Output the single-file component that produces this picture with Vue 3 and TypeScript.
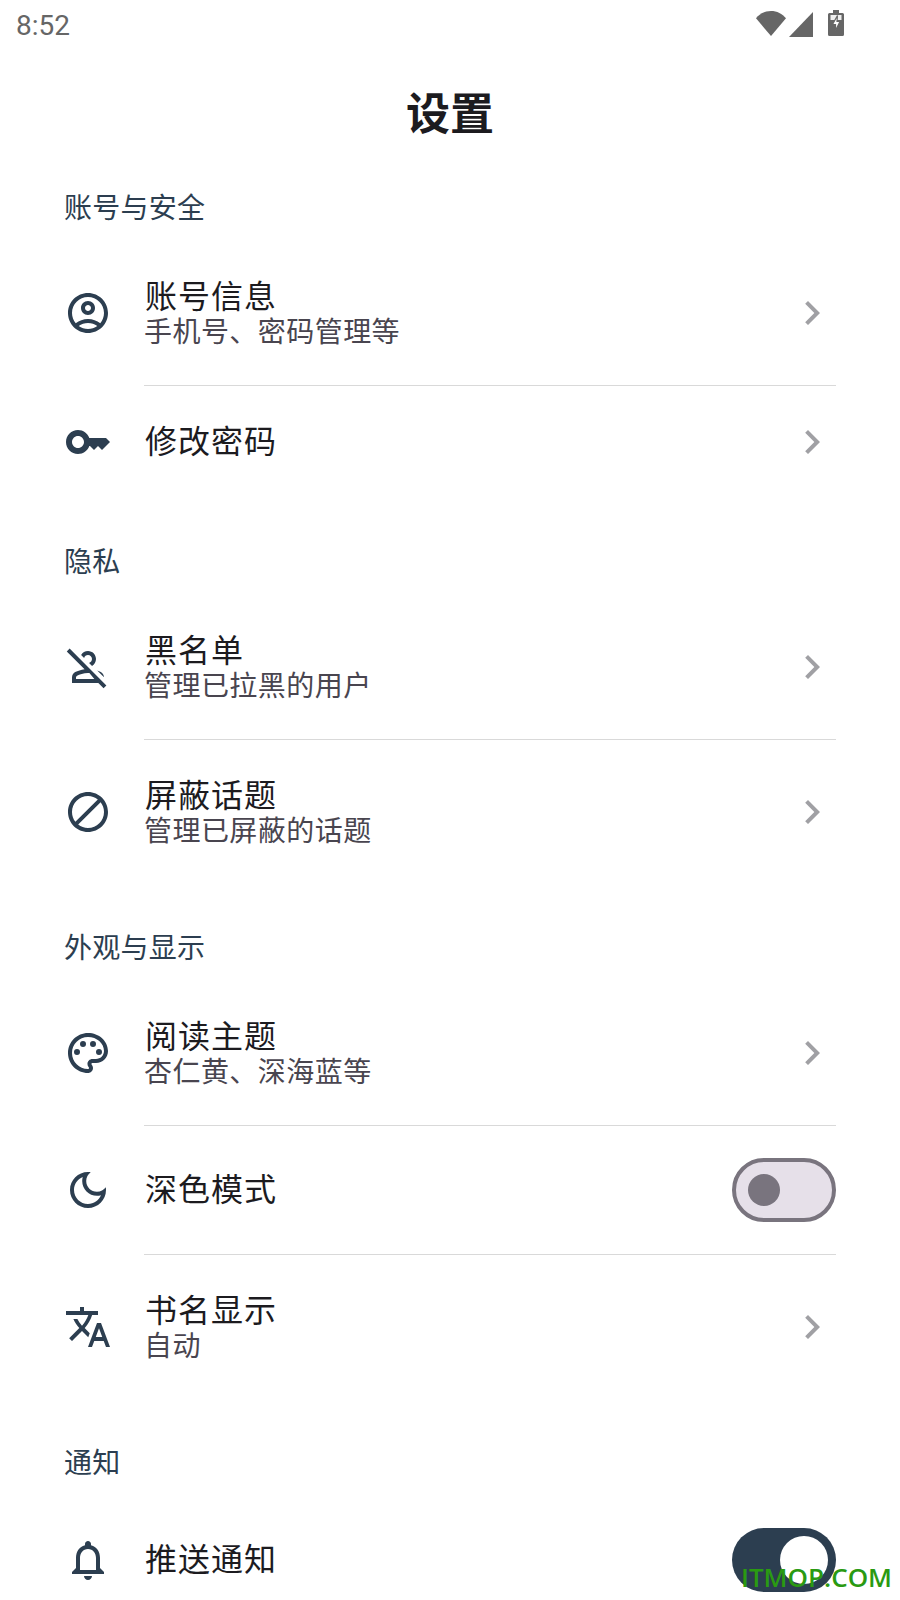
<script setup lang="ts">
interface Row {
  icon: string;
  title: string;
  sub?: string;
  toggle?: 'on' | 'off';
}
interface Section {
  label: string;
  rows: Row[];
}

const icons: Record<string, string> = {
  account:
    'M12 2C6.48 2 2 6.48 2 12s4.48 10 10 10 10-4.48 10-10S17.52 2 12 2zM7.35 18.5C8.66 17.56 10.26 17 12 17s3.34.56 4.65 1.5C15.34 19.44 13.74 20 12 20s-3.34-.56-4.65-1.5zm10.79-1.38C16.45 15.8 14.32 15 12 15s-4.45.8-6.14 2.12C4.7 15.73 4 13.95 4 12c0-4.42 3.58-8 8-8s8 3.58 8 8c0 1.95-.7 3.73-1.86 5.12zM12 6c-1.93 0-3.5 1.57-3.5 3.5S10.07 13 12 13s3.5-1.57 3.5-3.5S13.93 6 12 6zm0 5c-.83 0-1.5-.67-1.5-1.5S11.17 8 12 8s1.5.67 1.5 1.5S12.83 11 12 11z',
  key: 'M21 10h-8.35C11.83 7.67 9.61 6 7 6c-3.31 0-6 2.69-6 6s2.69 6 6 6c2.61 0 4.83-1.67 5.65-4H13l2 2 2-2 2 2 4-4.04L21 10zM7 15c-1.65 0-3-1.35-3-3s1.35-3 3-3 3 1.35 3 3-1.35 3-3 3z',
  personOff:
    'M12 4c-1.47 0-2.75.8-3.44 1.98l1.5 1.5C10.28 6.63 11.06 6 12 6c1.1 0 2 .9 2 2 0 .94-.63 1.72-1.48 1.94l1.5 1.5C15.2 10.75 16 9.47 16 8c0-2.21-1.79-4-4-4zM20 17.17c-.02-1.1-.63-2.11-1.61-2.62-.54-.28-1.13-.54-1.77-.76L20 17.17zm1.19 4.02L2.81 2.81 1.39 4.22l8.89 8.89c-1.81.23-3.39.79-4.67 1.45C4.63 15.07 4 16.1 4 17.22V20h13.17l2.61 2.61 1.41-1.42zM6 18v-.78c0-.38.2-.72.52-.88C7.71 15.73 9.72 15 12 15c.23 0 .46.01.69.03L15.17 18H6z',
  block:
    'M12 2C6.48 2 2 6.48 2 12s4.48 10 10 10 10-4.48 10-10S17.52 2 12 2zM4 12c0-4.42 3.58-8 8-8 1.85 0 3.55.63 4.9 1.69L5.69 16.9C4.63 15.55 4 13.85 4 12zm8 8c-1.85 0-3.55-.63-4.9-1.69L18.31 7.1C19.37 8.45 20 10.15 20 12c0 4.42-3.58 8-8 8z',
  palette:
    'M12 22C6.49 22 2 17.51 2 12S6.49 2 12 2s10 4.04 10 9c0 3.31-2.69 6-6 6h-1.77c-.28 0-.5.22-.5.5 0 .12.05.23.13.33.41.47.64 1.06.64 1.67 0 1.38-1.12 2.5-2.5 2.5zm0-18c-4.41 0-8 3.59-8 8s3.59 8 8 8c.28 0 .5-.22.5-.5 0-.16-.08-.28-.14-.35-.41-.46-.63-1.05-.63-1.65 0-1.38 1.12-2.5 2.5-2.5H16c2.21 0 4-1.79 4-4 0-3.86-3.59-7-8-7zM6.5 10a1.5 1.5 0 1 0 0 3 1.5 1.5 0 0 0 0-3zM9.500 6a1.5 1.5 0 1 0 0 3 1.5 1.5 0 0 0 0-3zM14.500 6a1.5 1.5 0 1 0 0 3 1.5 1.5 0 0 0 0-3zM17.500 10a1.5 1.5 0 1 0 0 3 1.5 1.5 0 0 0 0-3z',
  moon: 'M9.37 5.51C9.19 6.15 9.1 6.82 9.1 7.5c0 4.08 3.32 7.4 7.4 7.4.68 0 1.35-.09 1.99-.27C17.45 17.19 14.93 19 12 19c-3.86 0-7-3.14-7-7 0-2.93 1.81-5.45 4.37-6.49zM12 3c-4.97 0-9 4.03-9 9s4.03 9 9 9 9-4.03 9-9c0-.46-.04-.92-.1-1.36-.98 1.37-2.58 2.26-4.4 2.26-2.98 0-5.4-2.42-5.4-5.4 0-1.81.89-3.42 2.26-4.4C12.92 3.04 12.46 3 12 3z',
  translate:
    'M12.87 15.07l-2.54-2.51.03-.03c1.74-1.94 2.98-4.17 3.71-6.53H17V4h-7V2H8v2H1v1.99h11.17C11.5 7.92 10.44 9.75 9 11.35 8.07 10.32 7.3 9.19 6.69 8h-2c.73 1.63 1.73 3.17 2.98 4.56l-5.09 5.02L4 19l5-5 3.11 3.11.76-2.04zM18.5 10h-2L12 22h2l1.12-3h4.75L21 22h2l-4.5-12zm-2.62 7l1.62-4.33L19.12 17h-3.24z',
  bell: 'M12 22c1.1 0 2-.9 2-2h-4c0 1.1.9 2 2 2zm6-6v-5c0-3.07-1.63-5.64-4.5-6.32V4c0-.83-.67-1.5-1.5-1.5s-1.5.67-1.5 1.5v.68C7.64 5.36 6 7.92 6 11v5l-2 2v1h16v-1l-2-2zm-2 1H8v-6c0-2.48 1.51-4.5 4-4.5s4 2.02 4 4.5v6z',
};

const chevron = 'M10 6L8.59 7.41 13.17 12l-4.58 4.59L10 18l6-6z';

const sections: Section[] = [
  {
    label: '账号与安全',
    rows: [
      { icon: 'account', title: '账号信息', sub: '手机号、密码管理等' },
      { icon: 'key', title: '修改密码' },
    ],
  },
  {
    label: '隐私',
    rows: [
      { icon: 'personOff', title: '黑名单', sub: '管理已拉黑的用户' },
      { icon: 'block', title: '屏蔽话题', sub: '管理已屏蔽的话题' },
    ],
  },
  {
    label: '外观与显示',
    rows: [
      { icon: 'palette', title: '阅读主题', sub: '杏仁黄、深海蓝等' },
      { icon: 'moon', title: '深色模式', toggle: 'off' },
      { icon: 'translate', title: '书名显示', sub: '自动' },
    ],
  },
  {
    label: '通知',
    rows: [{ icon: 'bell', title: '推送通知', toggle: 'on' }],
  },
];
</script>

<template>
  <div class="page">
    <header class="status">
      <span class="time">8:52</span>
      <span class="status-icons">
        <svg class="s-wifi" width="30" height="25" viewBox="0 0 30 25">
          <path d="M0 7.300C3.800 2.700 9 0 15 0s11.200 2.700 15 7.300L15 25z" />
        </svg>
        <svg class="s-signal" width="24" height="25" viewBox="0 0 24 25">
          <path d="M24 0v25H0z" />
        </svg>
        <svg class="s-batt" width="16" height="26" viewBox="0 0 16 26">
          <path d="M5 0h6v3h3.500A1.500 1.500 0 0 1 16 4.500v20a1.500 1.500 0 0 1-1.500 1.500h-13A1.500 1.500 0 0 1 0 24.500v-20A1.500 1.500 0 0 1 1.500 3H5z" />
          <path class="batt-cut" d="M2.500 5h11v5h-11z" />
          <path class="batt-bolt" d="M9.500 5.500L4.500 14.500h3v6l4.500-9H9z" />
        </svg>
      </span>
    </header>

    <h1 class="title">设置</h1>

    <section v-for="section in sections" :key="section.label" class="section">
      <h2 class="label">{{ section.label }}</h2>
      <div v-for="row in section.rows" :key="row.title" class="row">
        <svg class="icon" viewBox="0 0 24 24"><path :d="icons[row.icon]" /></svg>
        <div class="body">
          <div class="text">
            <div class="row-title">{{ row.title }}</div>
            <div v-if="row.sub" class="row-sub">{{ row.sub }}</div>
          </div>
          <span v-if="row.toggle" class="switch" :class="row.toggle">
            <span class="thumb"></span>
          </span>
          <svg v-else class="chevron" viewBox="0 0 24 24"><path :d="chevron" /></svg>
        </div>
      </div>
    </section>

    <div class="watermark">ITMOP.COM</div>
  </div>
</template>

<style scoped>
.page {
  position: relative;
  width: 900px;
  height: 1600px;
  overflow: hidden;
  background: #fff;
  font-family: "Noto Sans CJK SC", "Noto Sans", sans-serif;
}
.status {
  display: flex;
  justify-content: space-between;
  align-items: flex-start;
  height: 50px;
  padding: 0 56px 0 16px;
  box-sizing: border-box;
}
.time {
  margin-top: 9px;
  font-family: Roboto, sans-serif;
  font-size: 28px;
  line-height: 34px;
  color: #666;
}
.status-icons {
  display: flex;
  align-items: flex-start;
  gap: 3px;
  margin-top: 10px;
}
.s-wifi {
  margin-top: 1px;
}
.s-signal {
  margin-top: 2px;
}
.s-batt {
  margin-left: 12px;
}
.status-icons svg path {
  fill: #666;
}
.status-icons .batt-cut {
  fill: #eee;
}
.status-icons .batt-bolt {
  fill: #fff;
  stroke: #666;
  stroke-width: 1.2;
}
.title {
  margin: 28px 0 0;
  height: 66px;
  font-size: 44px;
  line-height: 66px;
  font-weight: 700;
  text-align: center;
  color: #1c1b1f;
}
.label {
  margin: 0;
  padding: 40px 64px 13px;
  font-size: 28px;
  line-height: 44px;
  font-weight: 400;
  letter-spacing: 0.25px;
  color: #2c3e50;
}
.row {
  display: flex;
  align-items: stretch;
  padding-left: 64px;
  padding-right: 64px;
}
.icon {
  flex: none;
  align-self: center;
  width: 48px;
  height: 48px;
  margin-right: 32px;
}
.icon path {
  fill: #2c3e50;
}
.body {
  flex: 1;
  display: flex;
  align-items: center;
  justify-content: space-between;
  padding: 32px 0;
  min-width: 0;
}
.row + .row .body {
  border-top: 1px solid #d9d9d9;
}
.text {
  min-width: 0;
  padding: 1px 0 7px;
}
.row-title {
  font-size: 32px;
  line-height: 40px;
  letter-spacing: 1px;
  margin-left: 1px;
  color: #1c1b1f;
}
.row-sub {
  font-size: 28px;
  line-height: 32px;
  letter-spacing: 0.45px;
  color: #49454f;
}
.chevron {
  flex: none;
  width: 48px;
  height: 48px;
}
.chevron path {
  fill: #a0a0a4;
}
.switch {
  flex: none;
  display: flex;
  align-items: center;
  width: 104px;
  height: 64px;
  box-sizing: border-box;
  border-radius: 32px;
}
.switch.off {
  background: #e6e0e9;
  border: 4px solid #79747e;
  padding-left: 12px;
}
.switch.off .thumb {
  width: 32px;
  height: 32px;
  border-radius: 50%;
  background: #79747e;
}
.switch.on {
  background: #2c3e50;
  justify-content: flex-end;
  padding-right: 8px;
}
.switch.on .thumb {
  width: 48px;
  height: 48px;
  border-radius: 50%;
  background: #fff;
}
.watermark {
  position: absolute;
  left: 741px;
  top: 1559px;
  font-family: "Open Sans", sans-serif;
  font-size: 26px;
  line-height: 36px;
  font-weight: 600;
  color: #2a9a12;
}
</style>
